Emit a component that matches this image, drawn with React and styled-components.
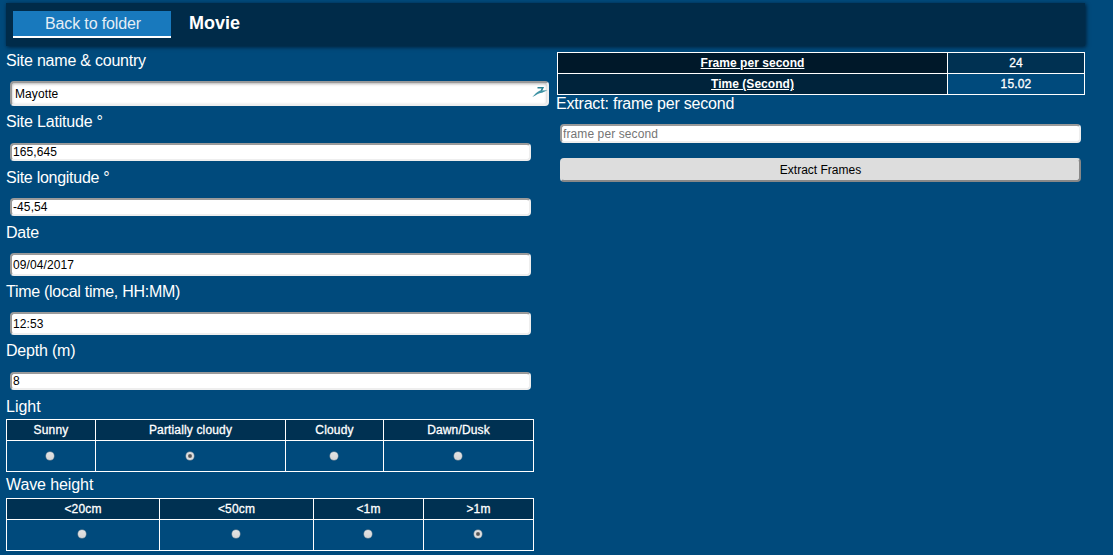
import React from "react";
import styled, { createGlobalStyle } from "styled-components";

const GlobalStyle = createGlobalStyle`
  * { box-sizing: border-box; }
  body {
    margin: 0;
    height: 555px;
    overflow: hidden;
    background: #004a7c;
    color: #fff;
    font: 16px/18px "Liberation Sans", Arial, sans-serif;
  }
`;

const Page = styled.div`
  width: 1085px;
  padding: 3px 0 0 6px;
`;

const Header = styled.header`
  display: flex;
  height: 43px;
  padding: 8px 7px 0;
  background: #002b49;
  box-shadow: 1px 1px 4px rgba(0, 15, 30, 0.8);
`;

const BackButton = styled.a`
  width: 158px;
  height: 27px;
  padding-left: 2px;
  line-height: 25px;
  letter-spacing: -0.13px;
  text-align: center;
  color: #e4eef6;
  background: #1879bd;
  border-bottom: 2px solid #fff;
`;

const Title = styled.h1`
  margin: 0 0 0 18px;
  font-size: 18px;
  line-height: 24px;
`;

const Columns = styled.main`
  display: flex;
  align-items: flex-start;
  gap: 7px;
  padding-top: 6px;
`;

const FormColumn = styled.section`
  width: 543px;
`;

const SideColumn = styled.section`
  width: 529px;
`;

const Field = styled.div`
  height: ${(p) => p.$height}px;
`;

const Label = styled.label`
  display: block;
  height: 18px;
  margin-bottom: ${(p) => p.$gap}px;
  letter-spacing: ${(p) => p.$tracking || 0}px;
  white-space: nowrap;
`;

const InputRow = styled.div`
  display: flex;
  position: relative;
  width: ${(p) => p.$width || 521}px;
  margin-left: 4px;
`;

const TextInput = styled.input`
  width: 100%;
  height: ${(p) => p.$height}px;
  padding: ${(p) => p.$pad || "0 1px"};
  border: 2px solid;
  border-color: #9a9a9a #eee #eee #9a9a9a;
  border-radius: 4px;
  background: #fff;
  color: #000;
  font: 12px "Liberation Sans", Arial, sans-serif;
  letter-spacing: 0.1px;
  outline: 0;
  ${(p) => p.$shaded && "box-shadow: inset 0 1px 3px rgba(0, 0, 0, 0.3);"}
  &::placeholder { color: #757575; opacity: 1; }
`;

const BirdIcon = styled.svg`
  position: absolute;
  top: 5px;
  right: 1px;
`;

const ExtractButton = styled.button`
  display: block;
  width: 521px;
  height: 24px;
  margin: 15px 0 0 4px;
  padding: 0;
  border: 2px solid;
  border-color: #ddd #888 #888 #ddd;
  border-radius: 4px;
  background: #ddd;
  color: #000;
  font: 12px "Liberation Sans", Arial, sans-serif;
`;

const Table = styled.div`
  display: grid;
  width: 528px;
  grid-template-columns: ${(p) => p.$columns};
  grid-template-rows: 21px ${(p) => p.$lastRow}px;
  border: solid #fff;
  border-width: 1px 0 0 1px;
  margin-bottom: ${(p) => p.$after || 0}px;
  margin-left: ${(p) => p.$indent || 0}px;
  font-size: 12px;
`;

const Cell = styled.div`
  display: flex;
  align-items: center;
  justify-content: center;
  border: solid #fff;
  border-width: 0 1px 1px 0;
  background: ${(p) => p.$bg || "transparent"};
  letter-spacing: 0.15px;
  -webkit-text-stroke: 0.3px #fff;
`;

const KeyCell = styled(Cell)`
  font-weight: bold;
  text-decoration: underline;
  letter-spacing: 0.03px;
  -webkit-text-stroke: 0;
`;

const Radio = styled.input`
  appearance: none;
  width: 8px;
  height: 8px;
  margin: 0 2px ${(p) => p.$lift}px 0;
  border-radius: 50%;
  background: ${(p) =>
    p.defaultChecked
      ? "radial-gradient(circle, #555 0 1.3px, #ddd 2.5px)"
      : "linear-gradient(#e4e4e4, #d6d6d6)"};
  box-shadow: 0 0 0 0.5px #8d979e;
`;

const fields = [
  { label: "Site Latitude °", value: "165,645", height: 56, gap: 12, input: 18, tracking: -0.2 },
  { label: "Site longitude °", value: "-45,54", height: 55, gap: 11, input: 18, tracking: -0.27 },
  { label: "Date", value: "09/04/2017", height: 59, gap: 11, input: 23, tracking: -0.2 },
  { label: "Time (local time, HH:MM)", value: "12:53", height: 59, gap: 11, input: 23, tracking: -0.28 },
  { label: "Depth (m)", value: "8", height: 56, gap: 12, input: 18, tracking: -0.2 },
];

function ChoiceTable({ name, options, selected, columns, after, lift }) {
  return (
    <Table $columns={columns} $lastRow={31} $after={after}>
      {options.map((o) => (
        <Cell key={o} $bg="#003152">{o}</Cell>
      ))}
      {options.map((o) => (
        <Cell key={o}>
          <Radio type="radio" name={name} aria-label={o} defaultChecked={o === selected} $lift={lift} />
        </Cell>
      ))}
    </Table>
  );
}

export default function App() {
  return (
    <Page>
      <GlobalStyle />
      <Header>
        <BackButton>Back to folder</BackButton>
        <Title>Movie</Title>
      </Header>
      <Columns>
        <FormColumn>
          <Field $height={61}>
            <Label $gap={11} $tracking={-0.22}>Site name &amp; country</Label>
            <InputRow $width={539}>
              <TextInput $height={25} $pad="0 3px" $shaded defaultValue="Mayotte" />
              <BirdIcon width="16" height="14" viewBox="0 0 16 14">
                <path d="M5.5 1.8h5.3L9.2 5" fill="none" stroke="#267f91" strokeWidth="1.6" />
                <path d="M0.3 11C2.5 8.4 5 5.6 8 4.4L15.5 4.2 10 6.8C6.5 7 4.2 9.4 0.3 11Z" fill="#3f93a4" />
              </BirdIcon>
            </InputRow>
          </Field>
          {fields.map((f) => (
            <Field key={f.label} $height={f.height}>
              <Label $gap={f.gap} $tracking={f.tracking}>{f.label}</Label>
              <InputRow>
                <TextInput $height={f.input} defaultValue={f.value} />
              </InputRow>
            </Field>
          ))}
          <Label $gap={3}>Light</Label>
          <ChoiceTable
            name="light"
            options={["Sunny", "Partially cloudy", "Cloudy", "Dawn/Dusk"]}
            selected="Partially cloudy"
            columns="89px 190px 98px 150px"
            after={4}
            lift={1}
          />
          <Label $gap={4} $tracking={-0.1}>Wave height</Label>
          <ChoiceTable
            name="wave"
            options={["<20cm", "<50cm", "<1m", ">1m"]}
            selected=">1m"
            columns="153px 154px 110px 110px"
            lift={2}
          />
        </FormColumn>
        <SideColumn>
          <Table $columns="390px 137px" $lastRow={21} $indent={1}>
            <KeyCell $bg="#001829">Frame per second</KeyCell>
            <Cell $bg="#003152">24</Cell>
            <KeyCell $bg="#00233b">Time (Second)</KeyCell>
            <Cell>15.02</Cell>
          </Table>
          <Label $gap={11} $tracking={-0.2}>Extract: frame per second</Label>
          <InputRow>
            <TextInput $height={19} placeholder="frame per second" />
          </InputRow>
          <ExtractButton>Extract Frames</ExtractButton>
        </SideColumn>
      </Columns>
    </Page>
  );
}
